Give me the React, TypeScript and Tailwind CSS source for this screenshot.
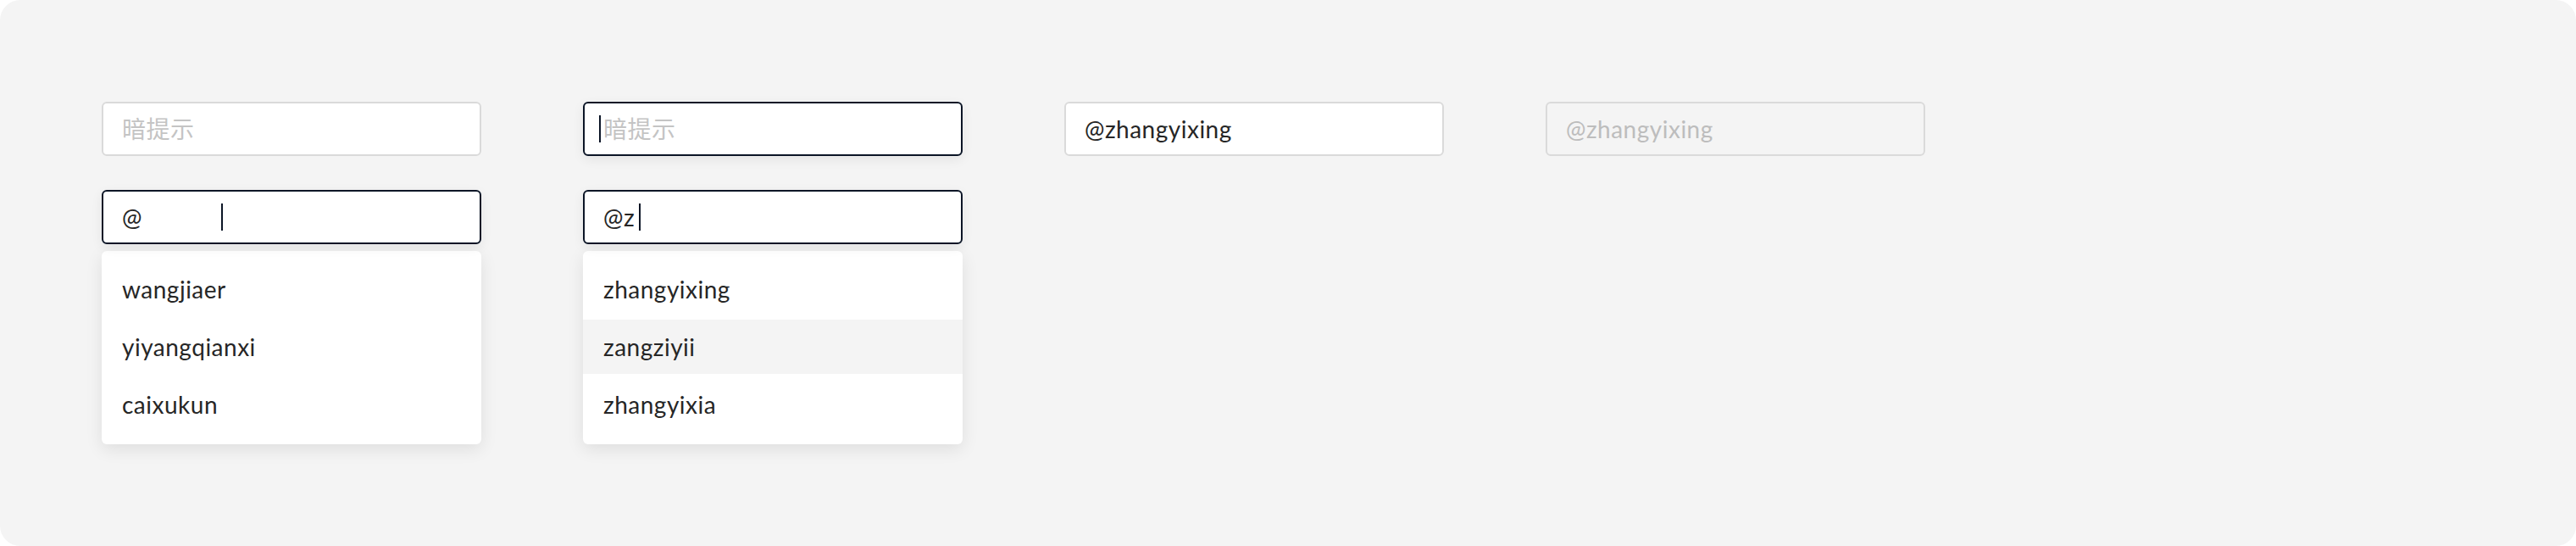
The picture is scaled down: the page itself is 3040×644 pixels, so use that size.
const font = { fontFamily: 'Lato, "Noto Sans CJK SC", sans-serif' };

function Caret({ className = '' }: { className?: string }) {
  return <span className={`inline-block w-[2px] h-[32px] bg-[#0b1526] ${className}`} />;
}

function Field({
  focused = false,
  disabled = false,
  children,
}: {
  focused?: boolean;
  disabled?: boolean;
  children: React.ReactNode;
}) {
  const base = 'relative flex items-center h-[64px] w-[448px] rounded-[6px] border-2 px-[22px] text-[28px] tracking-[0.5px]';
  const state = focused
    ? 'border-[#0b1526] bg-white shadow-[0_4px_14px_rgba(0,0,0,0.07)]'
    : disabled
      ? 'border-[#dadada] bg-[#f4f4f4] text-[#bdbdbd]'
      : 'border-[#dadada] bg-white';
  return <div className={`${base} ${state}`}>{children}</div>;
}

function Menu({ items, active }: { items: string[]; active?: number }) {
  return (
    <div className="mt-[8px] flex w-[448px] flex-col gap-[4px] rounded-[6px] bg-white pt-[13px] pb-[15px] shadow-[0_6px_20px_rgba(0,0,0,0.09)]">
      {items.map((name, i) => (
        <div
          key={name}
          className={`flex items-center h-[64px] px-[24px] text-[28px] tracking-[0.5px] text-[#262626] ${i === active ? 'bg-[#f4f4f4]' : ''}`}
        >
          {name}
        </div>
      ))}
    </div>
  );
}

export default function App() {
  return (
    <div className="w-[3040px] h-[644px] bg-white" style={font}>
      <div className="w-full h-full rounded-[24px] bg-[#f4f4f4] pl-[120px] pt-[120px]">
        <div className="flex gap-[120px] items-start">
          <div className="flex flex-col">
            <Field>
              <span className="text-[#c4c4c4]">暗提示</span>
            </Field>
            <div className="mt-[40px]">
              <Field focused>
                <span className="text-[#262626]">@</span>
                <Caret className="ml-[93px]" />
              </Field>
              <Menu items={['wangjiaer', 'yiyangqianxi', 'caixukun']} />
            </div>
          </div>

          <div className="flex flex-col">
            <Field focused>
              <Caret className="absolute left-[17px] top-[14px]" />
              <span className="text-[#c4c4c4]">暗提示</span>
            </Field>
            <div className="mt-[40px]">
              <Field focused>
                <span className="text-[#262626]">@z</span>
                <Caret className="ml-[5px]" />
              </Field>
              <Menu items={['zhangyixing', 'zangziyii', 'zhangyixia']} active={1} />
            </div>
          </div>

          <Field>
            <span className="text-[#262626]">@zhangyixing</span>
          </Field>

          <Field disabled>
            <span>@zhangyixing</span>
          </Field>
        </div>
      </div>
    </div>
  );
}
